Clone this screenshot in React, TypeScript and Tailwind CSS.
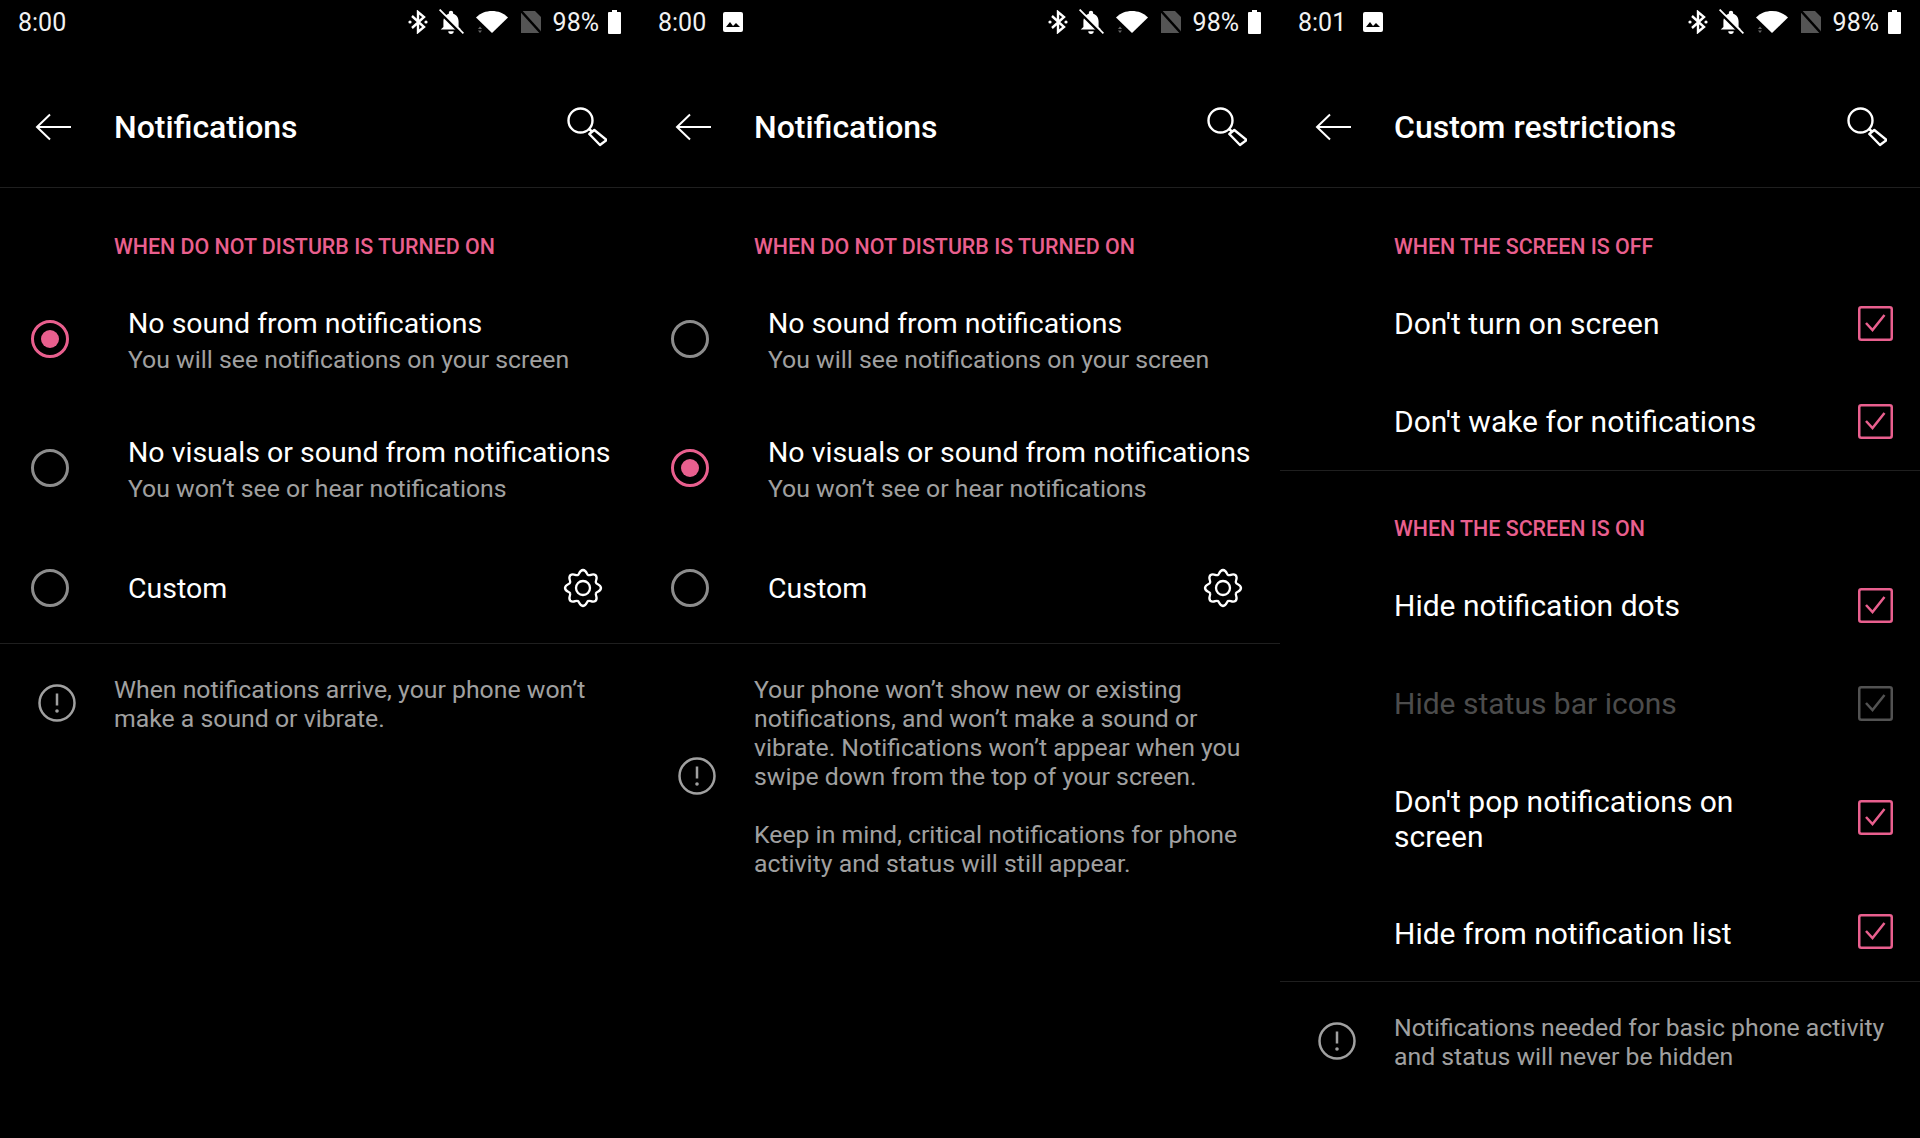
const PINK = "#e95f8e";

// 8 rounded teeth, tooth on top
function gearPath() {
	const pt = (r: number, deg: number) => {
		const a = ((deg - 90) * Math.PI) / 180;
		return `${(20 + r * Math.cos(a)).toFixed(2)} ${(20 + r * Math.sin(a)).toFixed(2)}`;
	};
	let d = `M${pt(14, -22.5)}`;
	for (let i = 0; i < 8; i++) {
		const a = i * 45;
		d += `C${pt(14, a - 14)} ${pt(18, a - 13)} ${pt(18, a)}`;
		d += `C${pt(18, a + 13)} ${pt(14, a + 14)} ${pt(14, a + 22.5)}`;
	}
	return d + "Z";
}

function Gear() {
	return (
		<svg width="40" height="40" viewBox="0 0 40 40" fill="none" stroke="#fff" strokeWidth="2.300" className="ml-auto">
			<path d={gearPath()} />
			<circle cx="20" cy="20" r="7" />
		</svg>
	);
}

function StatusBar({ time, image }: { time: string; image?: boolean }) {
	return (
		<div className="flex h-11 items-center pl-[18px] pr-[19px] text-[25px] text-[#f2f2f2]">
			<span className="w-[48px] pt-[2px]">{time}</span>
			{image && (
				<svg width="20" height="20" viewBox="0 0 20 20" className="ml-[17px]">
					<rect width="20" height="20" rx="2" fill="#fff" />
					<path d="M3 15l4-5 3 4 3-3 4 4z" fill="#000" />
				</svg>
			)}
			<div className="ml-auto flex items-center">
				{/* bluetooth */}
				<svg width="20" height="24" viewBox="0 0 20 24" fill="none" stroke="#fff" strokeWidth="2.400">
					<path d="M4 6l12 11-6 5V2l6 5L4 18" />
					<circle cx="2" cy="12" r="1.600" fill="#fff" stroke="none" />
					<circle cx="18" cy="12" r="1.600" fill="#fff" stroke="none" />
				</svg>
				{/* bell off */}
				<svg width="26" height="26" viewBox="0 0 24 24" className="ml-[10px]">
					<path d="M12 1.500a2 2 0 0 1 2 2v.8c3.500 1 5 4 5 7.200v5l2.500 2.500H2.500L5 16.500v-5c0-3.200 1.500-6.200 5-7.200v-.8a2 2 0 0 1 2-2z" fill="#fff" />
					<path d="M9.500 20.500h5a2.500 2.500 0 0 1-5 0z" fill="#fff" />
					<path d="M1 2l21 21" stroke="#000" strokeWidth="3" />
					<path d="M1.500 .5l22 22" stroke="#fff" strokeWidth="1.600" />
				</svg>
				{/* wifi */}
				<svg width="32" height="24" viewBox="0 0 32 24" className="ml-3">
					<path d="M16 23L0 7.500C4.500 3 10 1 16 1s11.500 2 16 6.500z" fill="#fff" />
					<path d="M2 19l2-2.500L6 19zM2 20.500h4L4 23z" fill="#666" />
				</svg>
				{/* sim off */}
				<svg width="20" height="22" viewBox="0 0 20 22" className="ml-[13px]">
					<path d="M0 0h14l6 6v16H0z" fill="#555" />
					<path d="M0 0l20 22" stroke="#000" strokeWidth="2.500" />
				</svg>
				<span className="ml-[12px] pt-[2px]">98%</span>
				{/* battery */}
				<svg width="13" height="24" viewBox="0 0 13 24" className="ml-[9px]">
					<path d="M4 0h5v2h3a1 1 0 0 1 1 1v20a1 1 0 0 1-1 1H1a1 1 0 0 1-1-1V3a1 1 0 0 1 1-1h3z" fill="#fff" />
				</svg>
			</div>
		</div>
	);
}

function Toolbar({ title }: { title: string }) {
	return (
		<div className="flex h-[144px] items-center border-b border-[#1f1f1f] pl-[35px] pr-[33px] pt-[23px]">
			<svg width="36" height="28" viewBox="0 0 36 28" fill="none" stroke="#fff" strokeWidth="2">
				<path d="M36 14H2M15 1.500L2 14l13 12.500" />
			</svg>
			<span className="ml-[43px] text-[32px] font-medium text-white">{title}</span>
			<svg width="40" height="40" viewBox="0 0 40 40" fill="none" stroke="#fff" strokeWidth="2.400" strokeLinejoin="round" className="ml-auto">
				<circle cx="13.500" cy="13.500" r="12" />
				<path d="M22 22l3 2.500M27.300 23L39.700 33 33 38 22.300 27z" />
			</svg>
		</div>
	);
}

function SectionLabel({ text, className }: { text: string; className: string }) {
	return (
		<div className={`pl-[114px] text-[21.4px] leading-6 font-medium text-[#e95f8e] ${className}`}>{text}</div>
	);
}

function Radio({ on }: { on?: boolean }) {
	return (
		<div
			className={`flex h-[38px] w-[38px] shrink-0 items-center justify-center rounded-full border-[3px] ${on ? "border-[#e95f8e]" : "border-[#8c8c8c]"}`}
		>
			{on && <div className="h-[18px] w-[18px] rounded-full bg-[#e95f8e]" />}
		</div>
	);
}

function RadioRow({ on, title, sub, className }: { on?: boolean; title: string; sub: string; className: string }) {
	return (
		<div className={`flex h-[98px] items-center pl-[31px] ${className}`}>
			<Radio on={on} />
			<div className="ml-[59px] whitespace-nowrap pt-[6px]">
				<div className="text-[28.5px] leading-9 text-white">{title}</div>
				<div className="text-[24.8px] leading-9 text-[#a0a0a0]">{sub}</div>
			</div>
		</div>
	);
}

function CustomRow() {
	return (
		<div className="mt-[36px] flex h-[70px] items-center pl-[31px] pr-[37px]">
			<Radio />
			<span className="ml-[59px] pt-[2px] text-[28.5px] text-white">Custom</span>
			<Gear />
		</div>
	);
}

function CheckRow({ title, disabled, className }: { title: React.ReactNode; disabled?: boolean; className: string }) {
	const color = disabled ? "#525252" : PINK;
	return (
		<div className={`flex items-center pl-[114px] pr-[27px] ${className}`}>
			<span className={`pt-px text-[30px] leading-[35px] ${disabled ? "text-[#4c4c4c]" : "text-white"}`}>{title}</span>
			<svg width="35" height="35" viewBox="0 0 35 35" fill="none" stroke={color} className="ml-auto shrink-0">
				<rect x="1.250" y="1.250" width="32.500" height="32.500" rx="2" strokeWidth="2.500" />
				<path d="M8 17l6.500 7L26.500 9" strokeWidth="2.500" />
			</svg>
		</div>
	);
}

function InfoNote({ children }: { children: React.ReactNode }) {
	return (
		<div className="flex items-center pl-[38px] pr-3 pt-[31px] text-[24.8px] leading-[29px] text-[#a0a0a0]">
			<svg width="38" height="38" viewBox="0 0 38 38" fill="none" stroke="#a0a0a0" strokeWidth="2.500" className="-mt-[2px] shrink-0">
				<circle cx="19" cy="19" r="17.500" />
				<path d="M19 9.500v12" />
				<circle cx="19" cy="27" r="1.800" fill="#a0a0a0" stroke="none" />
			</svg>
			<div className="ml-[38px] whitespace-nowrap">{children}</div>
		</div>
	);
}

function Divider() {
	return <div className="h-px bg-[#1f1f1f]" />;
}

export default function App() {
	return (
		<div className="flex h-[1138px] w-[1920px] overflow-hidden bg-black font-['Roboto',sans-serif]">
			{/* dnd: no sound */}
			<div className="w-[640px]">
				<StatusBar time="8:00" />
				<Toolbar title="Notifications" />
				<SectionLabel text="WHEN DO NOT DISTURB IS TURNED ON" className="mt-[47px]" />
				<RadioRow on title="No sound from notifications" sub="You will see notifications on your screen" className="mt-[31px]" />
				<RadioRow title="No visuals or sound from notifications" sub="You won’t see or hear notifications" className="mt-[31px]" />
				<CustomRow />
				<div className="mt-5">
					<Divider />
				</div>
				<InfoNote>
					When notifications arrive, your phone won’t
					<br />
					make a sound or vibrate.
				</InfoNote>
			</div>

			{/* dnd: no visuals */}
			<div className="w-[640px]">
				<StatusBar time="8:00" image />
				<Toolbar title="Notifications" />
				<SectionLabel text="WHEN DO NOT DISTURB IS TURNED ON" className="mt-[47px]" />
				<RadioRow title="No sound from notifications" sub="You will see notifications on your screen" className="mt-[31px]" />
				<RadioRow on title="No visuals or sound from notifications" sub="You won’t see or hear notifications" className="mt-[31px]" />
				<CustomRow />
				<div className="mt-5">
					<Divider />
				</div>
				<InfoNote>
					Your phone won’t show new or existing
					<br />
					notifications, and won’t make a sound or
					<br />
					vibrate. Notifications won’t appear when you
					<br />
					swipe down from the top of your screen.
					<br />
					<br />
					Keep in mind, critical notifications for phone
					<br />
					activity and status will still appear.
				</InfoNote>
			</div>

			{/* custom restrictions */}
			<div className="w-[640px]">
				<StatusBar time="8:01" image />
				<Toolbar title="Custom restrictions" />
				<SectionLabel text="WHEN THE SCREEN IS OFF" className="mt-[47px]" />
				<CheckRow title="Don't turn on screen" className="mt-[15px] h-[98px]" />
				<CheckRow title="Don't wake for notifications" className="h-[98px]" />
				<Divider />
				<SectionLabel text="WHEN THE SCREEN IS ON" className="mt-[46px]" />
				<CheckRow title="Hide notification dots" className="mt-[15px] h-[98px]" />
				<CheckRow title="Hide status bar icons" disabled className="h-[98px]" />
				<CheckRow
					title={
						<span className="block pt-[2px]">
							Don't pop notifications on
							<br />
							screen
						</span>
					}
					className="h-[130px]"
				/>
				<CheckRow title={<span className="block pt-[2px]">Hide from notification list</span>} className="h-[99px]" />
				<Divider />
				<InfoNote>
					Notifications needed for basic phone activity
					<br />
					and status will never be hidden
				</InfoNote>
			</div>
		</div>
	);
}
